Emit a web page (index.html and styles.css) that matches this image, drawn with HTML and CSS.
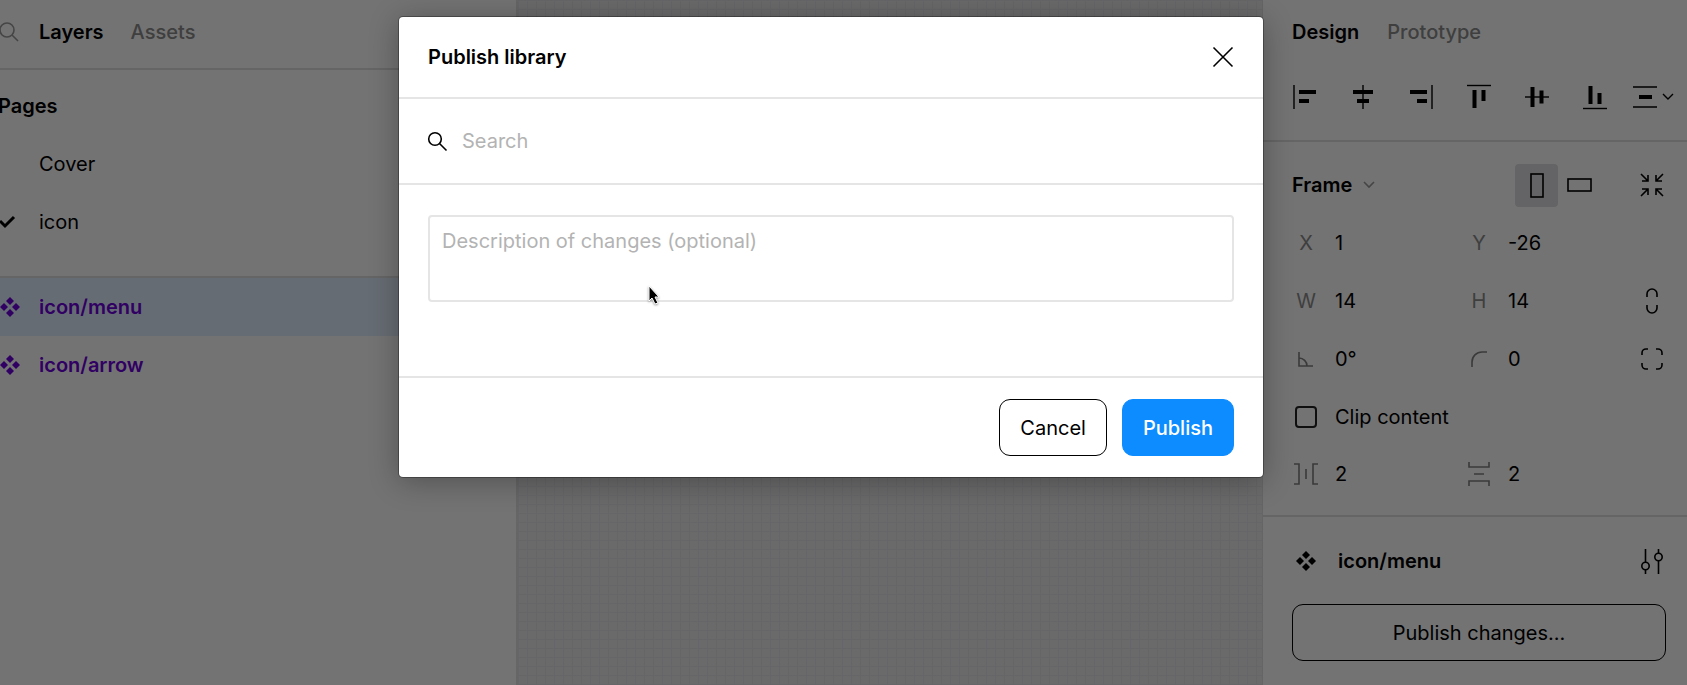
FILE: index.html
```html
<!DOCTYPE html>
<html lang="en">
<head>
  <meta charset="UTF-8" />
  <meta name="viewport" content="width=device-width, initial-scale=1.0" />
  <title>Publish library</title>
  <link rel="stylesheet" href="styles.css">
</head>
<body>
<div class="app">
  <aside class="left-panel">
    <div class="left-tabs">
      <button class="icon-btn muted" aria-label="Search layers">
        <svg width="20" height="20" viewBox="0 0 20 20"><circle cx="8" cy="8" r="7"/><path d="M13 13l6 6"/></svg>
      </button>
      <button class="tab active">Layers</button>
      <button class="tab">Assets</button>
    </div>
    <div class="pages">
      <h2 class="row">Pages</h2>
      <a class="row" href="#"><span class="row-icon"></span>Cover</a>
      <a class="row" href="#"><span class="row-icon"><svg class="check" width="20" height="12" viewBox="0 0 20 12"><path d="M0 5l5 5 9-9"/></svg></span>icon</a>
    </div>
    <div class="layers">
      <a class="row component selected" href="#"><span class="row-icon"><svg class="solid" width="20" height="20" viewBox="0 0 20 20"><path d="M10 0l4 4-4 4-4-4zM10 12l4 4-4 4-4-4zM4 6l4 4-4 4-4-4zM16 6l4 4-4 4-4-4z"/></svg></span>icon/menu</a>
      <a class="row component" href="#"><span class="row-icon"><svg class="solid" width="20" height="20" viewBox="0 0 20 20"><path d="M10 0l4 4-4 4-4-4zM10 12l4 4-4 4-4-4zM4 6l4 4-4 4-4-4zM16 6l4 4-4 4-4-4z"/></svg></span>icon/arrow</a>
    </div>
  </aside>

  <main class="canvas"></main>

  <aside class="right-panel">
    <div class="right-tabs">
      <button class="tab active">Design</button>
      <button class="tab">Prototype</button>
    </div>
    <div class="align-tools">
      <button class="icon-btn" aria-label="Align left">
        <svg width="24" height="24" viewBox="0 0 24 24"><path class="thin" d="M1 0v24"/><path class="thick" d="M6 7h17M6 16h10"/></svg>
      </button>
      <button class="icon-btn" aria-label="Align horizontal centers">
        <svg width="24" height="24" viewBox="0 0 24 24"><path class="thin" d="M12 0v24"/><path class="thick" d="M2 7h20M6 16h12"/></svg>
      </button>
      <button class="icon-btn" aria-label="Align right">
        <svg width="24" height="24" viewBox="0 0 24 24"><path class="thin" d="M23 0v24"/><path class="thick" d="M1 7h17M8 16h10"/></svg>
      </button>
      <button class="icon-btn" aria-label="Align top">
        <svg width="24" height="24" viewBox="0 0 24 24"><path class="thin" d="M0 0.5h24"/><path class="thick" d="M7.500 5v18M16.500 5v11"/></svg>
      </button>
      <button class="icon-btn" aria-label="Align vertical centers">
        <svg width="24" height="24" viewBox="0 0 24 24"><path class="thin" d="M0 12h24"/><path class="thick" d="M7.500 2v20M16.500 5.500v13"/></svg>
      </button>
      <button class="icon-btn" aria-label="Align bottom">
        <svg width="24" height="24" viewBox="0 0 24 24"><path class="thin" d="M0 23.500h24"/><path class="thick" d="M7.500 1v18M16.500 8v11"/></svg>
      </button>
      <button class="icon-btn distribute" aria-label="Distribute">
        <svg width="24" height="24" viewBox="0 0 24 24"><path class="thin" d="M0 2h24M0 22h24"/><path class="thick" d="M6 12h13"/></svg>
        <svg width="12" height="8" viewBox="0 0 12 8"><path class="thin" d="M1 1l5 5 5-5"/></svg>
      </button>
    </div>

    <div class="frame-props">
      <div class="frame-row">
        <button class="frame-menu">Frame
          <svg class="muted" width="12" height="8" viewBox="0 0 12 8"><path d="M1 1l5 5 5-5"/></svg>
        </button>
        <button class="toggle on" aria-label="Portrait">
          <svg width="14" height="25" viewBox="0 0 14 25"><rect x="1" y="1" width="12" height="23"/></svg>
        </button>
        <button class="toggle" aria-label="Landscape">
          <svg width="25" height="14" viewBox="0 0 25 14"><rect x="1" y="1" width="23" height="12"/></svg>
        </button>
        <button class="icon-btn fit" aria-label="Resize to fit">
          <svg width="22" height="22" viewBox="0 0 22 22"><path d="M0 0l7 7M1 7h6V1M22 0l-7 7M21 7h-6V1M0 22l7-7M1 15h6v6M22 22l-7-7M21 15h-6v6"/></svg>
        </button>
      </div>
      <div class="prop-row">
        <label class="field"><span>X</span><input type="text" value="1"></label>
        <label class="field"><span>Y</span><input type="text" value="-26"></label>
      </div>
      <div class="prop-row">
        <label class="field"><span>W</span><input type="text" value="14"></label>
        <label class="field"><span>H</span><input type="text" value="14"></label>
        <button class="icon-btn" aria-label="Constrain proportions">
          <svg width="12" height="26" viewBox="0 0 12 26"><path d="M1 9V6a5 5 0 0 1 10 0v3M1 17v3a5 5 0 0 0 10 0v-3"/></svg>
        </button>
      </div>
      <div class="prop-row">
        <label class="field"><span><svg width="16" height="16" viewBox="0 0 16 16"><path d="M1 1v14h14M1 7a8 8 0 0 1 8 8"/></svg></span><input type="text" value="0°" aria-label="Rotation"></label>
        <label class="field"><span><svg width="16" height="16" viewBox="0 0 16 16"><path d="M1 16v-5A10 10 0 0 1 11 1h5"/></svg></span><input type="text" value="0" aria-label="Corner radius"></label>
        <button class="icon-btn" aria-label="Independent corners">
          <svg width="22" height="22" viewBox="0 0 22 22"><path d="M1 7V5a4 4 0 0 1 4-4h2M15 1h2a4 4 0 0 1 4 4v2M21 15v2a4 4 0 0 1-4 4h-2M7 21H5a4 4 0 0 1-4-4v-2"/></svg>
        </button>
      </div>
      <label class="clip"><input type="checkbox">Clip content</label>
      <div class="prop-row">
        <label class="field"><span><svg width="24" height="22" viewBox="0 0 24 22"><path d="M0 1h5v20H0M12 6v10M24 1h-5v20h5"/></svg></span><input type="text" value="2" aria-label="Horizontal spacing"></label>
        <label class="field"><span><svg width="22" height="24" viewBox="0 0 22 24"><path d="M1 0v5h20V0M6 12h10M1 24v-5h20v5"/></svg></span><input type="text" value="2" aria-label="Vertical spacing"></label>
      </div>
    </div>

    <div class="component-props">
      <div class="component-row">
        <span class="component-icon"><svg class="solid" width="20" height="20" viewBox="0 0 20 20"><path d="M10 0l4 4-4 4-4-4zM10 12l4 4-4 4-4-4zM4 6l4 4-4 4-4-4zM16 6l4 4-4 4-4-4z"/></svg></span>
        <h2>icon/menu</h2>
        <button class="icon-btn" aria-label="Component configuration">
          <svg width="22" height="25" viewBox="0 0 22 25"><path d="M4.500 0v13M4.500 21v4M17.500 0v4M17.500 12v13"/><circle cx="4.500" cy="17" r="3.700"/><circle cx="17.500" cy="8" r="3.700"/></svg>
        </button>
      </div>
      <button class="btn wide">Publish changes...</button>
    </div>
  </aside>

  <div class="overlay">
    <div class="modal" role="dialog" aria-labelledby="modal-title">
      <div class="modal-header">
        <h1 id="modal-title">Publish library</h1>
        <button class="icon-btn" aria-label="Close">
          <svg width="20" height="20" viewBox="0 0 20 20"><path d="M0.500 0.500l19 19M19.500 0.500l-19 19"/></svg>
        </button>
      </div>
      <label class="search">
        <svg width="19" height="19" viewBox="0 0 19 19"><circle cx="7" cy="7" r="6.300"/><path d="M11.500 11.500l7 7"/></svg>
        <input type="text" placeholder="Search" aria-label="Search">
      </label>
      <div class="modal-body">
        <textarea placeholder="Description of changes (optional)" aria-label="Description of changes"></textarea>
        <svg class="cursor" width="15" height="22" viewBox="0 0 15 22"><path d="M2 2v15l3-3 3 6 3-1-3-6h4z"/></svg>
      </div>
      <div class="modal-footer">
        <button class="btn">Cancel</button>
        <button class="btn primary">Publish</button>
      </div>
    </div>
  </div>
</div>
</body>
</html>
```

FILE: styles.css
```css
* {
  box-sizing: border-box;
}
body {
  margin: 0;
  overflow: hidden;
  font-family: Inter, "Liberation Sans", sans-serif;
  font-size: 20px;
  line-height: 24px;
  color: #000;
}
button, input, textarea {
  font: inherit;
  color: inherit;
  background: none;
  border: none;
  padding: 0;
  margin: 0;
}
h1, h2 {
  margin: 0;
  font-size: 20px;
  font-weight: 600;
}
a {
  color: inherit;
  text-decoration: none;
}
svg {
  display: block;
  flex: none;
  overflow: visible;
  fill: none;
  stroke: #000;
  stroke-width: 1.6;
}
svg.solid {
  fill: currentColor;
  stroke: none;
}
svg.check {
  stroke-width: 3;
}
.thin {
  stroke-width: 1.4;
}
.thick {
  stroke-width: 4;
}

/* the window runs a little past the left edge */
.app {
  position: relative;
  display: flex;
  min-height: 100vh;
  margin-left: -25px;
}
.left-panel {
  width: 543px;
  flex: none;
  background: #fff;
  border-right: 2px solid #e3e3e3;
}
.canvas {
  flex: 1;
  background-color: #ececed;
  background-image:
    linear-gradient(#e3e3e6 1px, transparent 1px),
    linear-gradient(90deg, #e3e3e6 1px, transparent 1px);
  background-size: 9px 9px;
}
.right-panel {
  width: 425px;
  flex: none;
  background: #fff;
  border-left: 1px solid #e0e0e0;
}

.icon-btn {
  display: flex;
  align-items: center;
  justify-content: center;
  width: 28px;
  height: 28px;
}
.muted, .muted svg {
  stroke: #999;
}
.tab {
  color: #8c8c8c;
  font-weight: 500;
}
.tab.active {
  color: #000;
  font-weight: 600;
}

/* left panel */
.left-tabs {
  display: flex;
  align-items: center;
  height: 70px;
  padding: 0 20px 4px;
  border-bottom: 2px solid #e0e0e0;
}
.left-tabs .tab {
  margin-left: 16px;
}
.left-tabs .tab + .tab {
  margin-left: 27px;
}
.pages {
  padding: 7px 0 25px;
  border-bottom: 2px solid #e0e0e0;
}
.row {
  display: flex;
  align-items: center;
  height: 58px;
  padding-left: 23px;
}
.row-icon {
  display: flex;
  justify-content: center;
  width: 24px;
  margin-right: 17px;
}
.component {
  color: #6e00dc;
  font-weight: 600;
}
.selected {
  background: #e3f0ff;
}

/* right panel */
.right-tabs {
  display: flex;
  align-items: center;
  gap: 28px;
  height: 64px;
  padding-left: 29px;
}
.align-tools {
  display: grid;
  grid-template-columns: repeat(6, 58px) 1fr;
  justify-items: center;
  align-items: center;
  height: 78px;
  padding: 0 0 10px 13px;
  border-bottom: 2px solid #e0e0e0;
}
.align-tools .distribute {
  justify-self: start;
  margin-left: 4px;
  width: 50px;
  gap: 5px;
}
.frame-props {
  padding: 14px 21px 12px 29px;
  border-bottom: 2px solid #e0e0e0;
}
.frame-row, .component-row {
  display: flex;
  align-items: center;
  height: 58px;
}
.frame-menu {
  display: flex;
  align-items: center;
  gap: 11px;
  margin-right: auto;
  font-weight: 600;
}
.toggle {
  display: flex;
  align-items: center;
  justify-content: center;
  width: 43px;
  height: 43px;
  border-radius: 4px;
}
.toggle.on {
  background: #dedee2;
}
.fit {
  margin-left: 37px;
}
.prop-row {
  display: grid;
  grid-template-columns: 173px 173px 1fr;
  align-items: center;
  height: 58px;
}
.prop-row .icon-btn {
  justify-self: end;
}
.field {
  display: flex;
  align-items: center;
  gap: 15px;
}
.field span {
  display: flex;
  justify-content: center;
  width: 28px;
  flex: none;
  color: #8c8c8c;
}
.field svg {
  stroke: #808080;
}
.field input {
  width: 100px;
}
.clip {
  display: flex;
  align-items: center;
  gap: 18px;
  height: 57px;
  padding-left: 3px;
}
.clip input {
  appearance: none;
  width: 22px;
  height: 22px;
  border: 2px solid #222;
  border-radius: 4px;
}
.component-props {
  padding: 15px 21px 15px 29px;
}
.component-icon {
  display: flex;
  justify-content: center;
  width: 28px;
  margin-right: 18px;
}
.component-row h2 {
  flex: 1;
}
.btn {
  height: 57px;
  padding: 0 20px;
  border: 1px solid #000;
  border-radius: 11px;
}
.btn.wide {
  width: 100%;
  margin-top: 14px;
}
.btn.primary {
  background: #0d8cff;
  border-color: #0d8cff;
  color: #fff;
  font-weight: 500;
}

/* modal */
.overlay {
  position: absolute;
  inset: 0;
  padding-top: 17px;
  background: rgba(0, 0, 0, 0.55);
}
.modal {
  max-width: 864px;
  margin: 0 auto;
  background: #fff;
  border-radius: 4px;
  box-shadow: 0 0 0 1px rgba(0, 0, 0, 0.3), 0 4px 30px rgba(0, 0, 0, 0.3);
}
.modal-header {
  display: flex;
  align-items: center;
  justify-content: space-between;
  height: 82px;
  padding: 0 26px 0 29px;
  border-bottom: 2px solid #e5e5e5;
}
.search {
  display: flex;
  align-items: center;
  gap: 15px;
  height: 86px;
  padding: 0 29px;
  border-bottom: 2px solid #e5e5e5;
}
.search input {
  flex: 1;
}
::placeholder {
  color: #b3b3b3;
  opacity: 1;
}
input:focus, textarea:focus {
  outline: none;
}
.modal-body {
  position: relative;
  padding: 30px 29px 74px;
}
.modal-body textarea {
  display: block;
  width: 100%;
  height: 87px;
  padding: 12px;
  border: 2px solid #e5e5e5;
  border-radius: 4px;
  resize: none;
}
.cursor {
  position: absolute;
  left: 248px;
  top: 99px;
  fill: #000;
  stroke: #fff;
  stroke-width: 1;
  filter: drop-shadow(0 1px 1px rgba(0, 0, 0, 0.4));
}
.modal-footer {
  display: flex;
  justify-content: flex-end;
  gap: 15px;
  padding: 21px 29px;
  border-top: 2px solid #e5e5e5;
}
```
